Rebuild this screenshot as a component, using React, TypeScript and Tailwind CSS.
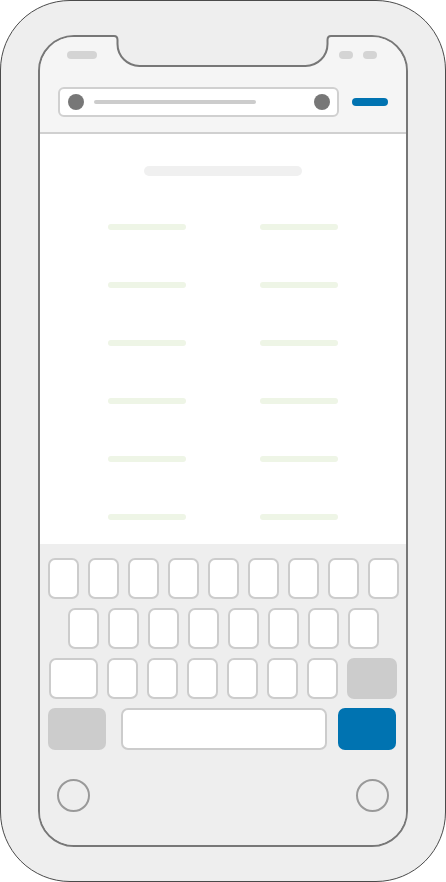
const keyCls = "w-[31px] h-[41px] bg-white border-2 border-[#cccccc] rounded-[7px]";

function Notch() {
  // cut-out at the top of the screen, drawn over the screen border
  return (
    <svg
      className="absolute top-[-2px] left-[71px]"
      width="223"
      height="34"
      viewBox="0 0 223 34"
    >
      <path
        d="M0 0 L0 1 L3 1 Q6.5 1 6.5 5 L6.5 9 A22 22 0 0 0 28.5 31 L194.5 31 A22 22 0 0 0 216.5 9 L216.5 5 Q216.5 1 220 1 L223 1 L223 0 Z"
        fill="#eeeeee"
      />
      <path
        d="M0 1 L3 1 Q6.5 1 6.5 5 L6.5 9 A22 22 0 0 0 28.5 31 L194.5 31 A22 22 0 0 0 216.5 9 L216.5 5 Q216.5 1 220 1 L223 1"
        fill="none"
        stroke="#777777"
        strokeWidth="2"
      />
    </svg>
  );
}

function TopBar() {
  return (
    <div className="h-[97px] shrink-0 rounded-t-[34px] bg-[#f5f5f5] border-b-2 border-[#d0d0d0]">
      {/* status bar */}
      <div className="flex justify-between pt-[14px] pl-[27px] pr-[29px]">
        <div className="w-[30px] h-[8px] rounded-full bg-[#d4d4d4]"></div>
        <div className="flex gap-[10px]">
          <div className="w-[14px] h-[8px] rounded-full bg-[#d4d4d4]"></div>
          <div className="w-[14px] h-[8px] rounded-full bg-[#d4d4d4]"></div>
        </div>
      </div>

      {/* address bar */}
      <div className="flex items-center gap-[13px] px-[18px] mt-[28px]">
        <div className="flex-1 h-[30px] bg-white border-2 border-[#d0d0d0] rounded-[6px] flex items-center pl-[8px] pr-[7px]">
          <div className="w-[16px] h-[16px] rounded-full bg-[#777777]"></div>
          <div className="ml-[10px] w-[162px] h-[4px] rounded-full bg-[#cccccc]"></div>
          <div className="ml-auto w-[16px] h-[16px] rounded-full bg-[#777777]"></div>
        </div>
        <div className="w-[36px] h-[8px] rounded-full bg-[#0073b1]"></div>
      </div>
    </div>
  );
}

function Content() {
  const rows = [0, 1, 2, 3, 4, 5];
  return (
    <div className="h-[410px] shrink-0 bg-white flex flex-col items-center">
      <div className="mt-[32px] w-[158px] h-[10px] rounded-full bg-[#f0f0f0]"></div>
      <div className="mt-[48px] flex flex-col gap-[52px]">
        {rows.map((r) => (
          <div key={r} className="flex gap-[74px]">
            <div className="w-[78px] h-[6px] rounded-full bg-[#eef5e6]"></div>
            <div className="w-[78px] h-[6px] rounded-full bg-[#eef5e6]"></div>
          </div>
        ))}
      </div>
    </div>
  );
}

function Keyboard() {
  return (
    <div className="flex-1 bg-[#eeeeee] rounded-b-[34px] pt-[14px]">
      <div className="flex flex-col gap-[9px]">
        <div className="flex justify-center gap-[9px]">
          {Array.from({ length: 9 }).map((_, i) => (
            <div key={i} className={keyCls}></div>
          ))}
        </div>
        <div className="flex justify-center gap-[9px]">
          {Array.from({ length: 8 }).map((_, i) => (
            <div key={i} className={keyCls}></div>
          ))}
        </div>
        <div className="flex justify-center gap-[9px]">
          <div className="w-[49px] h-[41px] bg-white border-2 border-[#cccccc] rounded-[7px]"></div>
          {Array.from({ length: 6 }).map((_, i) => (
            <div key={i} className={keyCls}></div>
          ))}
          <div className="w-[50px] h-[41px] bg-[#cccccc] rounded-[7px]"></div>
        </div>
        <div className="flex pl-[8px]">
          <div className="w-[58px] h-[42px] bg-[#cccccc] rounded-[7px]"></div>
          <div className="ml-[15px] w-[206px] h-[42px] bg-white border-2 border-[#cccccc] rounded-[7px]"></div>
          <div className="ml-[11px] w-[58px] h-[42px] bg-[#0073b1] rounded-[7px]"></div>
        </div>
      </div>

      {/* home buttons */}
      <div className="mt-[29px] flex justify-between px-[17px]">
        <div className="w-[33px] h-[33px] rounded-full border-2 border-[#999999]"></div>
        <div className="w-[33px] h-[33px] rounded-full border-2 border-[#999999]"></div>
      </div>
    </div>
  );
}

export default function App() {
  return (
    <div className="w-[446px] h-[882px] bg-white">
      <div className="w-[446px] h-[882px] rounded-[70px] border border-[#4a4a4a] bg-[#eeeeee] pt-[34px] pl-[37px]">
        <div className="relative w-[370px] h-[812px] rounded-[36px] border-2 border-[#777777] flex flex-col bg-[#eeeeee]">
          <TopBar />
          <Content />
          <Keyboard />
          <Notch />
        </div>
      </div>
    </div>
  );
}
